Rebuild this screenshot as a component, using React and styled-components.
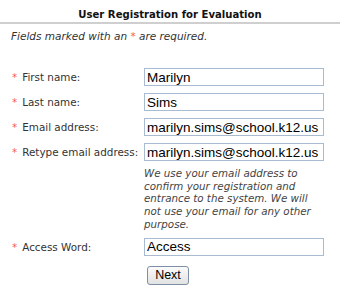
import React from "react";
import styled, { createGlobalStyle } from "styled-components";

const Global = createGlobalStyle`
  html, body { margin: 0; padding: 0; background: #fff; }
  body { font-family: "DejaVu Sans", Verdana, sans-serif; color: #333; }
`;

const Page = styled.div`
  width: 340px;
  height: 293px;
  overflow: hidden;
  background: #fff;
`;

const Header = styled.h1`
  margin: 0;
  height: 24px;
  box-sizing: border-box;
  padding-top: 8px;
  font-size: 10.1px;
  line-height: 13px;
  font-weight: bold;
  text-align: center;
  color: #111;
  border-bottom: 2px solid #cfcfcf;
`;

const Intro = styled.p`
  margin: 0;
  padding: 6px 0 0 11px;
  font-size: 10.5px;
  line-height: 13px;
  font-style: italic;
  color: #333;
  height: 44px;
  box-sizing: border-box;
`;

const Star = styled.span`
  color: #f0605a;
  font-style: normal;
`;

const Form = styled.div`
  display: grid;
  grid-template-columns: 132px 180px;
  row-gap: 7px;
  padding-left: 12px;
  align-items: center;
`;

const Label = styled.label`
  font-size: 10.4px;
  color: #333;
  white-space: nowrap;
  display: flex;
  gap: 5px;
  align-items: center;
`;

const Input = styled.input`
  box-sizing: border-box;
  width: 180px;
  height: 18px;
  margin: 0;
  padding: 0 2px;
  border: 1px solid #a9bbd0;
  font-family: "Liberation Sans", Arial, sans-serif;
  font-size: 13.5px;
  color: #000;
  background: #fff;
  outline: none;
`;

const Help = styled.p`
  grid-column: 2;
  margin: -1px 0 0;
  font-size: 10.3px;
  font-style: italic;
  line-height: 12.7px;
  color: #444;
  padding-right: 10px;
`;

const Button = styled.button`
  grid-column: 2;
  justify-self: start;
  margin: 3px 0 0 3px;
  width: 42px;
  height: 19px;
  padding: 0;
  border: 1px solid #7d8fa6;
  border-radius: 3px;
  background: linear-gradient(#fbfbfb, #e2e2e2);
  font-family: "Liberation Sans", Arial, sans-serif;
  font-size: 12.5px;
  color: #000;
`;

const Field = ({ label, value }) => (
  <>
    <Label>
      <Star>*</Star>
      {label}
    </Label>
    <Input defaultValue={value} />
  </>
);

export default function App() {
  return (
    <Page>
      <Global />
      <Header>User Registration for Evaluation</Header>
      <Intro>
        Fields marked with an <Star>*</Star> are required.
      </Intro>
      <Form>
        <Field label="First name:" value="Marilyn" />
        <Field label="Last name:" value="Sims" />
        <Field label="Email address:" value="marilyn.sims@school.k12.us" />
        <Field label="Retype email address:" value="marilyn.sims@school.k12.us" />
        <Help>
          We use your email address to confirm your registration and entrance
          to the system. We will not use your email for any other purpose.
        </Help>
        <Field label="Access Word:" value="Access" />
        <Button>Next</Button>
      </Form>
    </Page>
  );
}
